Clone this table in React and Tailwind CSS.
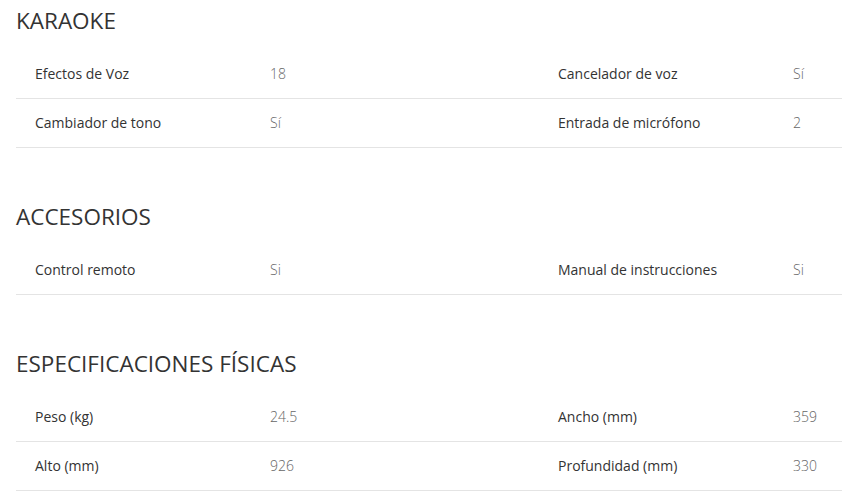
import React from "react";

const sections = [
  {
    title: "KARAOKE",
    rows: [
      ["Efectos de Voz", "18", "Cancelador de voz", "Sí"],
      ["Cambiador de tono", "Sí", "Entrada de micrófono", "2"],
    ],
  },
  {
    title: "ACCESORIOS",
    rows: [["Control remoto", "Si", "Manual de instrucciones", "Si"]],
  },
  {
    title: "ESPECIFICACIONES FÍSICAS",
    rows: [
      ["Peso (kg)", "24.5", "Ancho (mm)", "359"],
      ["Alto (mm)", "926", "Profundidad (mm)", "330"],
    ],
  },
];

export default function App() {
  return (
    <div
      className="w-[842px] h-[496px] overflow-hidden bg-white pl-4 pt-[6px]"
      style={{ fontFamily: '"Open Sans", "Liberation Sans", sans-serif' }}
    >
      {sections.map((s, i) => (
        <section key={s.title} className={i > 0 ? "mt-[54px]" : ""}>
          <h2 className="h-[30px] leading-[30px] text-[22.5px] text-[#333] mb-[14px]">
            {s.title}
          </h2>
          {s.rows.map((r, j) => (
            <div
              key={j}
              className="grid grid-cols-[254px_269px_254px_1fr] h-[49px] pb-[2px] items-center border-b border-[#e4e4e4] text-[14px]"
            >
              <div className="pl-[19px] text-[#333]">{r[0]}</div>
              <div className="text-[#666] font-light">{r[1]}</div>
              <div className="pl-[19px] text-[#333]">{r[2]}</div>
              <div className="text-[#666] font-light">{r[3]}</div>
            </div>
          ))}
        </section>
      ))}
    </div>
  );
}
